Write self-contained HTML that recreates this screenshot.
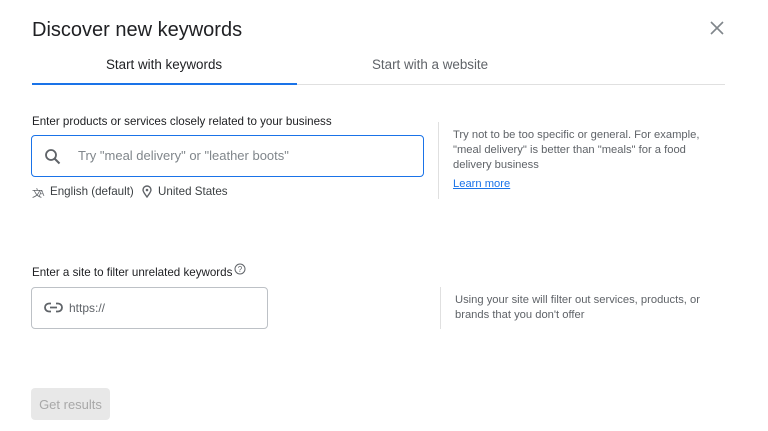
<!DOCTYPE html>
<html><head><meta charset="utf-8"><style>
*{margin:0;padding:0;box-sizing:border-box}
body{width:768px;height:431px;background:#fff;font-family:"Liberation Sans",Arial,sans-serif;color:#202124;position:relative;overflow:hidden}
.a{position:absolute;white-space:nowrap}
</style></head><body>
<div class="a" style="left:32px;top:19px;font-size:20px;color:#202124">Discover new keywords</div>
<svg class="a" style="left:710px;top:21px" width="14" height="14" viewBox="0 0 14 14"><path d="M1 1L13 13M13 1L1 13" stroke="#80868b" stroke-width="1.6"/></svg>
<div class="a" style="left:106px;top:57px;font-size:13.4px;color:#202124">Start with keywords</div>
<div class="a" style="left:372px;top:57px;font-size:13.4px;color:#5f6368">Start with a website</div>
<div class="a" style="left:32px;top:84px;width:693px;height:1px;background:#e0e0e0"></div>
<div class="a" style="left:32px;top:83px;width:265px;height:2px;background:#1a73e8"></div>

<div class="a" style="left:32px;top:115px;font-size:11.6px;color:#202124">Enter products or services closely related to your business</div>
<div class="a" style="left:31px;top:135px;width:393px;height:42px;border:1.5px solid #1a73e8;border-radius:4px"></div>
<svg class="a" style="left:44px;top:148px" width="18" height="18" viewBox="0 0 18 18"><circle cx="7" cy="7" r="5" fill="none" stroke="#5f6368" stroke-width="1.8"/><path d="M10.5 10.5L15.5 15.5" stroke="#5f6368" stroke-width="2"/></svg>
<div class="a" style="left:78px;top:148px;font-size:13px;color:#80868b">Try "meal delivery" or "leather boots"</div>
<div class="a" style="left:32px;top:185px;font-size:10px;color:#5f6368">文</div>
<div class="a" style="left:39px;top:189px;font-size:8px;color:#5f6368">A</div>
<div class="a" style="left:50px;top:185px;font-size:11.6px;color:#3c4043">English (default)</div>
<svg class="a" style="left:142px;top:185px" width="10" height="13" viewBox="0 0 10 13"><path d="M5 12C2 8 1 6.5 1 5a4 4 0 018 0c0 1.5-1 3-4 7z" fill="none" stroke="#5f6368" stroke-width="1.4"/><circle cx="5" cy="5" r="1.3" fill="#5f6368"/></svg>
<div class="a" style="left:158px;top:185px;font-size:11.6px;color:#3c4043">United States</div>

<div class="a" style="left:438px;top:122px;width:1px;height:77px;background:#e0e0e0"></div>
<div class="a" style="left:453px;top:128px;font-size:11.2px;line-height:15px;color:#5f6368;white-space:normal;width:258px">Try not to be too specific or general. For example, "meal delivery" is better than "meals" for a food delivery business</div>
<div class="a" style="left:453px;top:178px;font-size:11.2px;color:#1a73e8;text-decoration:underline">Learn more</div>

<div class="a" style="left:32px;top:266px;font-size:11.6px;color:#202124">Enter a site to filter unrelated keywords</div>
<svg class="a" style="left:234px;top:263px" width="12" height="12" viewBox="0 0 12 12"><circle cx="6" cy="6" r="5" fill="none" stroke="#5f6368" stroke-width="1"/><text x="6" y="9" font-size="8" text-anchor="middle" fill="#5f6368" font-family="Liberation Sans">?</text></svg>
<div class="a" style="left:31px;top:287px;width:237px;height:42px;border:1px solid #bdc1c6;border-radius:4px"></div>
<svg class="a" style="left:44px;top:302px" width="19" height="11" viewBox="0 0 19 11"><path d="M7 1.5H5a4 4 0 000 8h2M12 1.5h2a4 4 0 010 8h-2M6 5.5h7" fill="none" stroke="#5f6368" stroke-width="1.8"/></svg>
<div class="a" style="left:69px;top:301px;font-size:12px;color:#5f6368">https://</div>
<div class="a" style="left:440px;top:287px;width:1px;height:42px;background:#e0e0e0"></div>
<div class="a" style="left:455px;top:293px;font-size:11.2px;line-height:15px;color:#5f6368">Using your site will filter out services, products, or<br>brands that you don't offer</div>

<div class="a" style="left:31px;top:388px;width:79px;height:32px;background:#e8e8e8;border-radius:4px;font-size:13px;color:#a8a8a8;text-align:center;line-height:33px">Get results</div>
</body></html>
